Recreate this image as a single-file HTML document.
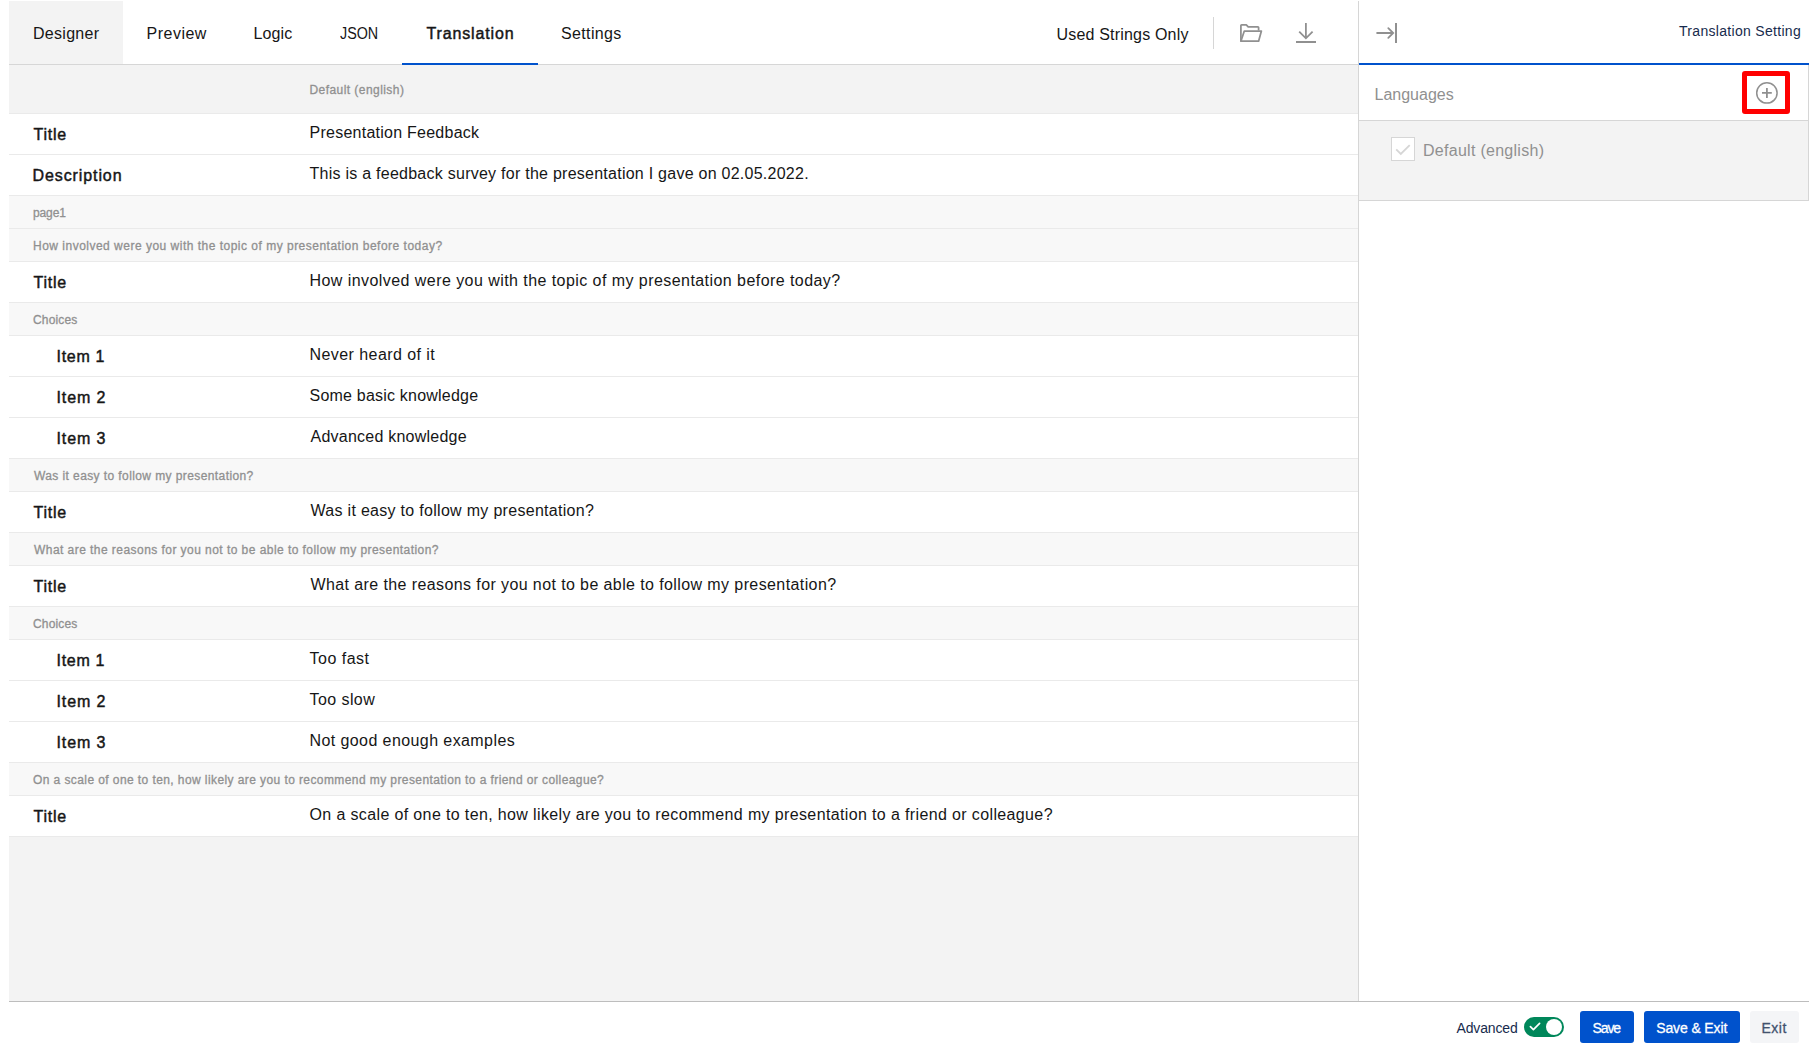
<!DOCTYPE html>
<html><head><meta charset="utf-8"><title>Translation</title>
<style>
html,body{margin:0;padding:0}
body{width:1818px;height:1054px;position:relative;overflow:hidden;background:#fff;font-family:"Liberation Sans", sans-serif}
.a{position:absolute}
.t{position:absolute;white-space:nowrap;line-height:20px}
.rw{position:absolute;left:9px;width:1349px;height:40px;background:#fff;border-bottom:1px solid #eaeaea}
.rg{position:absolute;left:9px;width:1349px;height:32px;background:#f8f8f8;border-bottom:1px solid #eaeaea}
</style></head><body>
<!-- tab bar -->
<div class="t" style="left:339.8px;top:24px;font-size:16px;color:#161616;transform:scaleX(0.895);transform-origin:0 0">JSON</div>
<div class="a" style="left:9px;top:1px;width:114px;height:63px;background:#f3f3f3"></div>
<div class="a" style="left:9px;top:64px;width:1349px;height:1px;background:#d6d6d6"></div>
<div class="a" style="left:402px;top:63px;width:136px;height:2px;background:#0052cc"></div>
<div class="a" style="left:1213px;top:17px;width:1px;height:32px;background:#d6d6d6"></div>
<svg class="a" style="left:1234px;top:18px" width="90" height="30" viewBox="1234 18 90 30">
 <path d="M1240.9 41.2 V25.6 Q1240.9 24.9 1241.6 24.9 H1246.3 L1248.2 26.9 H1257.9 Q1258.6 26.9 1258.6 27.6 V30.6" fill="none" stroke="#909090" stroke-width="1.75" stroke-linejoin="round"/>
 <path d="M1240.9 41.2 L1244.3 31.0 H1261.4 L1258.6 41.2 Z" fill="none" stroke="#909090" stroke-width="1.75" stroke-linejoin="round"/>
 <path d="M1305.9 23 V38.6 M1299.2 31.6 L1305.9 38.3 L1312.6 31.6" fill="none" stroke="#909090" stroke-width="1.8"/>
 <rect x="1296" y="41" width="20" height="2" fill="#909090"/>
</svg>
<!-- header row -->
<div class="a" style="left:9px;top:65px;width:1349px;height:48px;background:#f3f3f3;border-bottom:1px solid #eaeaea"></div>
<div class="rw" style="top:114px"></div><div class="rw" style="top:155px"></div><div class="rg" style="top:196px"></div><div class="rg" style="top:229px"></div><div class="rw" style="top:262px"></div><div class="rg" style="top:303px"></div><div class="rw" style="top:336px"></div><div class="rw" style="top:377px"></div><div class="rw" style="top:418px"></div><div class="rg" style="top:459px"></div><div class="rw" style="top:492px"></div><div class="rg" style="top:533px"></div><div class="rw" style="top:566px"></div><div class="rg" style="top:607px"></div><div class="rw" style="top:640px"></div><div class="rw" style="top:681px"></div><div class="rw" style="top:722px"></div><div class="rg" style="top:763px"></div><div class="rw" style="top:796px"></div>
<div class="a" style="left:9px;top:837px;width:1349px;height:164px;background:#f3f3f3"></div>
<!-- vertical divider -->
<div class="a" style="left:1358px;top:1px;width:1px;height:1000px;background:#d6d6d6"></div>
<!-- right panel -->
<div class="a" style="left:1359px;top:63px;width:450px;height:2px;background:#0052cc"></div>
<svg class="a" style="left:1366px;top:14px" width="40" height="36" viewBox="1366 14 40 36">
 <path d="M1377.1 33 H1393.2 M1388.3 28.1 L1393.2 33 L1388.3 37.9" fill="none" stroke="#909090" stroke-width="1.8" stroke-linecap="round"/>
 <rect x="1395" y="23" width="2" height="20" fill="#909090"/>
</svg>
<div class="a" style="left:1359px;top:120px;width:449px;height:1px;background:#d6d6d6"></div>
<div class="a" style="left:1359px;top:121px;width:449px;height:79px;background:#f3f3f3"></div>
<div class="a" style="left:1359px;top:200px;width:450px;height:1px;background:#d6d6d6"></div>
<div class="a" style="left:1808px;top:65px;width:1px;height:136px;background:#d6d6d6"></div>
<div class="a" style="left:1742px;top:71px;width:38px;height:33px;border:5px solid #ff0000;border-radius:3px"></div>
<svg class="a" style="left:1736px;top:68px" width="60" height="50" viewBox="1736 68 60 50">
 <circle cx="1766.9" cy="92.9" r="10.2" fill="none" stroke="#909090" stroke-width="1.5"/>
 <path d="M1762 92.9 H1771.8 M1766.9 88 V97.9" stroke="#909090" stroke-width="1.8"/>
</svg>
<div class="a" style="left:1391px;top:137px;width:22px;height:22px;background:#fff;border:1px solid #d6d6d6"></div>
<svg class="a" style="left:1391px;top:137px" width="24" height="24" viewBox="1391 137 24 24">
 <path d="M1396.2 149.3 L1400.8 154 L1409.7 145.1" fill="none" stroke="#d6d6d6" stroke-width="1.8"/>
</svg>
<!-- footer -->
<div class="a" style="left:9px;top:1001px;width:1800px;height:1px;background:#bdbdbd"></div>
<div class="a" style="left:1524px;top:1017px;width:40px;height:20px;border-radius:10px;background:#00875a"></div>
<div class="a" style="left:1546px;top:1019px;width:16px;height:16px;border-radius:8px;background:#fff"></div>
<svg class="a" style="left:1524px;top:1017px" width="40" height="20" viewBox="1524 1017 40 20">
 <path d="M1530.4 1026.6 L1533.4 1029.6 L1539.6 1023.4" fill="none" stroke="#fff" stroke-width="1.7" stroke-linecap="round" stroke-linejoin="round"/>
</svg>
<div class="a" style="left:1580px;top:1011px;width:54px;height:32px;border-radius:3px;background:#0052cc"></div>
<div class="a" style="left:1644px;top:1011px;width:96px;height:32px;border-radius:3px;background:#0052cc"></div>
<div class="a" style="left:1750px;top:1011px;width:49px;height:32px;border-radius:3px;background:#f4f5f7"></div>
<div id="tab_designer" class="t" style="left:33.00px;top:24px;font-size:16px;font-weight:400;color:#161616;letter-spacing:0.286px;">Designer</div><div id="tab_preview" class="t" style="left:146.50px;top:24px;font-size:16px;font-weight:400;color:#161616;letter-spacing:0.500px;">Preview</div><div id="tab_logic" class="t" style="left:253.50px;top:24px;font-size:16px;font-weight:400;color:#161616;letter-spacing:0.125px;">Logic</div><div id="tab_translation" class="t" style="left:426.50px;top:24px;font-size:16px;font-weight:400;color:#161616;letter-spacing:0.850px;-webkit-text-stroke:0.45px #161616;">Translation</div><div id="tab_settings" class="t" style="left:561.00px;top:24px;font-size:16px;font-weight:400;color:#161616;letter-spacing:0.357px;">Settings</div><div id="used" class="t" style="left:1056.50px;top:25px;font-size:16px;font-weight:400;color:#161616;letter-spacing:0.188px;">Used Strings Only</div><div id="trset" class="t" style="left:1679.00px;top:21px;font-size:14px;font-weight:400;color:#172b4d;letter-spacing:0.306px;">Translation Setting</div><div id="languages" class="t" style="left:1374.50px;top:85px;font-size:16px;font-weight:400;color:#909090;letter-spacing:-0.000px;">Languages</div><div id="defpanel" class="t" style="left:1423.00px;top:141px;font-size:16px;font-weight:400;color:#909090;letter-spacing:0.281px;">Default (english)</div><div id="defhead" class="t" style="left:309.50px;top:80px;font-size:12px;font-weight:400;color:#909090;letter-spacing:0.438px;-webkit-text-stroke:0.3px #909090;">Default (english)</div><div id="advanced" class="t" style="left:1456.50px;top:1018px;font-size:14px;font-weight:400;color:#172b4d;letter-spacing:-0.143px;">Advanced</div><div id="btn_save" class="t" style="left:1592.40px;top:1018px;font-size:14px;font-weight:400;color:#fff;letter-spacing:-1.067px;-webkit-text-stroke:0.3px #fff;">Save</div><div id="btn_saveexit" class="t" style="left:1656.20px;top:1018px;font-size:14px;font-weight:400;color:#fff;letter-spacing:-0.120px;-webkit-text-stroke:0.3px #fff;">Save &amp; Exit</div><div id="btn_exit" class="t" style="left:1761.40px;top:1018px;font-size:14px;font-weight:400;color:#42526e;letter-spacing:0.533px;-webkit-text-stroke:0.3px #42526e;">Exit</div><div id="r0_l" class="t" style="left:33.50px;top:125px;font-size:16px;font-weight:400;color:#161616;letter-spacing:0.750px;-webkit-text-stroke:0.45px #161616;">Title</div><div id="r0_v" class="t" style="left:309.50px;top:123px;font-size:16px;font-weight:400;color:#161616;letter-spacing:0.250px;">Presentation Feedback</div><div id="r1_l" class="t" style="left:32.50px;top:166px;font-size:16px;font-weight:400;color:#161616;letter-spacing:0.900px;-webkit-text-stroke:0.45px #161616;">Description</div><div id="r1_v" class="t" style="left:309.50px;top:164px;font-size:16px;font-weight:400;color:#161616;letter-spacing:0.254px;">This is a feedback survey for the presentation I gave on 02.05.2022.</div><div id="r2_g" class="t" style="left:33.00px;top:203px;font-size:12px;font-weight:400;color:#909090;letter-spacing:-0.125px;-webkit-text-stroke:0.3px #909090;">page1</div><div id="r3_g" class="t" style="left:33.00px;top:236px;font-size:12px;font-weight:400;color:#909090;letter-spacing:0.493px;-webkit-text-stroke:0.3px #909090;">How involved were you with the topic of my presentation before today?</div><div id="r4_l" class="t" style="left:33.50px;top:273px;font-size:16px;font-weight:400;color:#161616;letter-spacing:0.750px;-webkit-text-stroke:0.45px #161616;">Title</div><div id="r4_v" class="t" style="left:309.50px;top:271px;font-size:16px;font-weight:400;color:#161616;letter-spacing:0.441px;">How involved were you with the topic of my presentation before today?</div><div id="r5_g" class="t" style="left:33.00px;top:310px;font-size:12px;font-weight:400;color:#909090;letter-spacing:0.167px;-webkit-text-stroke:0.3px #909090;">Choices</div><div id="r6_l" class="t" style="left:56.50px;top:347px;font-size:16px;font-weight:400;color:#161616;letter-spacing:0.700px;-webkit-text-stroke:0.45px #161616;">Item 1</div><div id="r6_v" class="t" style="left:309.50px;top:345px;font-size:16px;font-weight:400;color:#161616;letter-spacing:0.438px;">Never heard of it</div><div id="r7_l" class="t" style="left:56.50px;top:388px;font-size:16px;font-weight:400;color:#161616;letter-spacing:0.900px;-webkit-text-stroke:0.45px #161616;">Item 2</div><div id="r7_v" class="t" style="left:309.50px;top:386px;font-size:16px;font-weight:400;color:#161616;letter-spacing:0.211px;">Some basic knowledge</div><div id="r8_l" class="t" style="left:56.50px;top:429px;font-size:16px;font-weight:400;color:#161616;letter-spacing:0.900px;-webkit-text-stroke:0.45px #161616;">Item 3</div><div id="r8_v" class="t" style="left:310.50px;top:427px;font-size:16px;font-weight:400;color:#161616;letter-spacing:0.235px;">Advanced knowledge</div><div id="r9_g" class="t" style="left:34.00px;top:466px;font-size:12px;font-weight:400;color:#909090;letter-spacing:0.405px;-webkit-text-stroke:0.3px #909090;">Was it easy to follow my presentation?</div><div id="r10_l" class="t" style="left:33.50px;top:503px;font-size:16px;font-weight:400;color:#161616;letter-spacing:0.750px;-webkit-text-stroke:0.45px #161616;">Title</div><div id="r10_v" class="t" style="left:310.50px;top:501px;font-size:16px;font-weight:400;color:#161616;letter-spacing:0.297px;">Was it easy to follow my presentation?</div><div id="r11_g" class="t" style="left:34.00px;top:540px;font-size:12px;font-weight:400;color:#909090;letter-spacing:0.449px;-webkit-text-stroke:0.3px #909090;">What are the reasons for you not to be able to follow my presentation?</div><div id="r12_l" class="t" style="left:33.50px;top:577px;font-size:16px;font-weight:400;color:#161616;letter-spacing:0.750px;-webkit-text-stroke:0.45px #161616;">Title</div><div id="r12_v" class="t" style="left:310.50px;top:575px;font-size:16px;font-weight:400;color:#161616;letter-spacing:0.399px;">What are the reasons for you not to be able to follow my presentation?</div><div id="r13_g" class="t" style="left:33.00px;top:614px;font-size:12px;font-weight:400;color:#909090;letter-spacing:0.167px;-webkit-text-stroke:0.3px #909090;">Choices</div><div id="r14_l" class="t" style="left:56.50px;top:651px;font-size:16px;font-weight:400;color:#161616;letter-spacing:0.700px;-webkit-text-stroke:0.45px #161616;">Item 1</div><div id="r14_v" class="t" style="left:309.50px;top:649px;font-size:16px;font-weight:400;color:#161616;letter-spacing:0.500px;">Too fast</div><div id="r15_l" class="t" style="left:56.50px;top:692px;font-size:16px;font-weight:400;color:#161616;letter-spacing:0.900px;-webkit-text-stroke:0.45px #161616;">Item 2</div><div id="r15_v" class="t" style="left:309.50px;top:690px;font-size:16px;font-weight:400;color:#161616;letter-spacing:0.429px;">Too slow</div><div id="r16_l" class="t" style="left:56.50px;top:733px;font-size:16px;font-weight:400;color:#161616;letter-spacing:0.900px;-webkit-text-stroke:0.45px #161616;">Item 3</div><div id="r16_v" class="t" style="left:309.50px;top:731px;font-size:16px;font-weight:400;color:#161616;letter-spacing:0.413px;">Not good enough examples</div><div id="r17_g" class="t" style="left:33.00px;top:770px;font-size:12px;font-weight:400;color:#909090;letter-spacing:0.413px;-webkit-text-stroke:0.3px #909090;">On a scale of one to ten, how likely are you to recommend my presentation to a friend or colleague?</div><div id="r18_l" class="t" style="left:33.50px;top:807px;font-size:16px;font-weight:400;color:#161616;letter-spacing:0.750px;-webkit-text-stroke:0.45px #161616;">Title</div><div id="r18_v" class="t" style="left:309.50px;top:805px;font-size:16px;font-weight:400;color:#161616;letter-spacing:0.367px;">On a scale of one to ten, how likely are you to recommend my presentation to a friend or colleague?</div>
</body></html>
